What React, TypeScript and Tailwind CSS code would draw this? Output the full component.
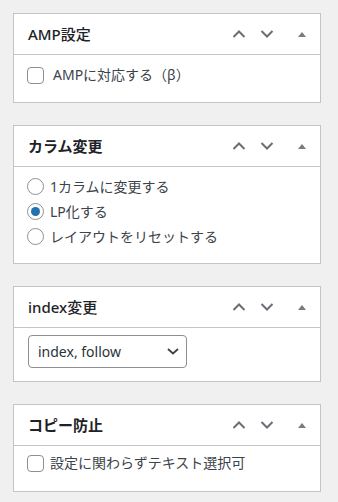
import type { ReactNode } from 'react';

const FONT = { fontFamily: '"Noto Sans", "Noto Sans CJK JP", sans-serif' };

function UpIcon() {
  return (
    <svg width="14" height="8" viewBox="0 0 14 8" fill="none">
      <path d="M1.5 7L7 1.5L12.5 7" stroke="currentColor" strokeWidth="2" />
    </svg>
  );
}

function DownIcon() {
  return (
    <svg width="14" height="8" viewBox="0 0 14 8" fill="none">
      <path d="M1.5 1L7 6.5L12.5 1" stroke="currentColor" strokeWidth="2" />
    </svg>
  );
}

function ToggleIcon() {
  return (
    <svg width="8" height="5" viewBox="0 0 8 5">
      <path d="M0 5L4 0L8 5Z" fill="currentColor" />
    </svg>
  );
}

type BoxProps = {
  title: string;
  bold?: boolean;
  bodyClass: string;
  children: ReactNode;
};

function Box({ title, bold, bodyClass, children }: BoxProps) {
  return (
    <section className="bg-white border border-[#c3c4c7]">
      {/* Header */}
      <div className="h-[41px] border-b border-[#c3c4c7] flex items-center pl-[14px] pr-[4px]">
        <h2 className={`flex-1 text-[15px] leading-5 text-[#1d2327] ${bold ? 'font-bold' : 'font-medium'}`}>
          {title}
        </h2>
        <button className="w-7 h-10 flex items-center justify-center text-[#6b6f75]">
          <UpIcon />
        </button>
        <button className="w-7 h-10 flex items-center justify-center text-[#6b6f75]">
          <DownIcon />
        </button>
        <button className="w-7 h-10 ml-[7px] flex items-center justify-center text-[#787c82]">
          <ToggleIcon />
        </button>
      </div>
      <div className={bodyClass}>{children}</div>
    </section>
  );
}

function Checkbox({ label, gap }: { label: string; gap: string }) {
  return (
    <label className={`flex items-center h-5 ${gap}`}>
      <span className="w-[17px] h-[17px] rounded-[4px] border border-[#8c8f94] bg-white shrink-0"></span>
      <span className="text-[14px] leading-5 text-[#3c434a]">{label}</span>
    </label>
  );
}

function Radio({ label, checked }: { label: string; checked?: boolean }) {
  return (
    <label className="flex items-center h-[25px] gap-[6px]">
      <span className="w-[17px] h-[17px] rounded-full border border-[#8c8f94] bg-white shrink-0 flex items-center justify-center">
        {checked && <span className="w-[9px] h-[9px] rounded-full bg-[#2271b1]"></span>}
      </span>
      <span className="text-[14px] leading-5 text-[#3c434a]">{label}</span>
    </label>
  );
}

export default function App() {
  const radios = [
    { label: '1カラムに変更する', checked: false },
    { label: 'LP化する', checked: true },
    { label: 'レイアウトをリセットする', checked: false },
  ];

  return (
    <div className="min-h-[502px] bg-[#f0f0f1] pt-[13px] pl-[13px] w-[338px]" style={FONT}>
      <div className="w-[308px] flex flex-col gap-[22px]">
        <Box title="AMP設定" bodyClass="h-[47px] pt-[10px] pl-[13px]">
          <Checkbox label="AMPに対応する（β）" gap="gap-[9px]" />
        </Box>

        <Box title="カラム変更" bold bodyClass="h-[96px] pt-[7px] pl-[13px]">
          {radios.map((r, i) => (
            <Radio key={i} label={r.label} checked={r.checked} />
          ))}
        </Box>

        <Box title="index変更" bodyClass="h-[53px] pt-[7px] pl-[14px]">
          <div className="w-[159px] h-[33px] rounded-[4px] border border-[#8c8f94] bg-white flex items-center pl-[9px] pr-[7px]">
            <span className="flex-1 text-[14px] leading-5 text-[#2c3338]">index, follow</span>
            <svg width="12" height="7" viewBox="0 0 12 7" fill="none">
              <path d="M1 1L6 5.5L11 1" stroke="#3c434a" strokeWidth="1.8" />
            </svg>
          </div>
        </Box>

        <Box title="コピー防止" bold bodyClass="h-[45px] pt-[7px] pl-[13px]">
          <Checkbox label="設定に関わらずテキスト選択可" gap="gap-[6px]" />
        </Box>
      </div>
    </div>
  );
}
